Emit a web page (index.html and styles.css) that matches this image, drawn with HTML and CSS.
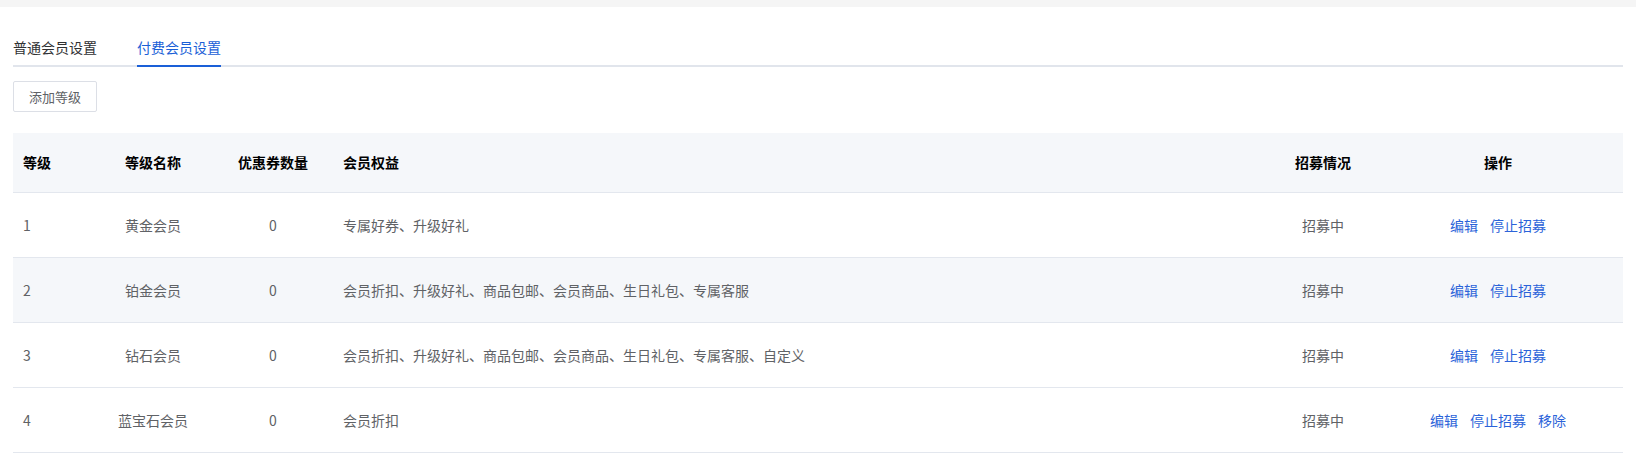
FILE: index.html
```html
<!DOCTYPE html>
<html lang="zh-CN">
<head>
<meta charset="utf-8">
<title>付费会员设置</title>
<link rel="stylesheet" href="styles.css">
</head>
<body>
<div class="topbar"></div>
<div class="page">
  <div class="tabs">
    <div class="tab">普通会员设置</div>
    <div class="tab active">付费会员设置</div>
  </div>
  <div class="toolbar">
    <button class="btn">添加等级</button>
  </div>
  <table class="grid">
    <colgroup>
      <col class="c-level">
      <col class="c-name">
      <col class="c-count">
      <col class="c-rights">
      <col class="c-status">
      <col class="c-ops">
    </colgroup>
    <thead>
      <tr>
        <th class="left">等级</th>
        <th>等级名称</th>
        <th>优惠券数量</th>
        <th class="left">会员权益</th>
        <th>招募情况</th>
        <th>操作</th>
      </tr>
    </thead>
    <tbody>
      <tr>
        <td class="left">1</td>
        <td>黄金会员</td>
        <td>0</td>
        <td class="left">专属好券、升级好礼</td>
        <td>招募中</td>
        <td><span class="ops"><a>编辑</a><a>停止招募</a></span></td>
      </tr>
      <tr class="stripe">
        <td class="left">2</td>
        <td>铂金会员</td>
        <td>0</td>
        <td class="left">会员折扣、升级好礼、商品包邮、会员商品、生日礼包、专属客服</td>
        <td>招募中</td>
        <td><span class="ops"><a>编辑</a><a>停止招募</a></span></td>
      </tr>
      <tr>
        <td class="left">3</td>
        <td>钻石会员</td>
        <td>0</td>
        <td class="left">会员折扣、升级好礼、商品包邮、会员商品、生日礼包、专属客服、自定义</td>
        <td>招募中</td>
        <td><span class="ops"><a>编辑</a><a>停止招募</a></span></td>
      </tr>
      <tr>
        <td class="left">4</td>
        <td>蓝宝石会员</td>
        <td>0</td>
        <td class="left">会员折扣</td>
        <td>招募中</td>
        <td><span class="ops"><a>编辑</a><a>停止招募</a><a>移除</a></span></td>
      </tr>
    </tbody>
  </table>
</div>
</body>
</html>
```

FILE: styles.css
```css
* { box-sizing: border-box; }
html, body { margin: 0; padding: 0; background: #fff; }
body {
  font-family: "Microsoft YaHei", "Noto Sans CJK SC", "Liberation Sans", sans-serif;
  font-size: 14px;
  color: #606266;
}
.topbar { height: 7px; background: #f5f5f5; }
.page { padding: 20px 13px 0 13px; }

.tabs {
  display: flex;
  gap: 40px;
  height: 40px;
  border-bottom: 2px solid #e1e5ec;
}
.tab {
  height: 40px;
  line-height: 40px;
  font-size: 14px;
  color: #303133;
  margin-bottom: -2px;
  border-bottom: 2px solid transparent;
}
.tab.active {
  color: #1a5fd7;
  border-bottom-color: #1a5fd7;
}

.toolbar { padding-top: 14px; padding-bottom: 21px; }
.btn {
  width: 84px;
  height: 31px;
  padding: 0;
  background: #fff;
  border: 1px solid #dcdfe6;
  border-radius: 2px;
  font-family: inherit;
  font-size: 13px;
  color: #606266;
}

.grid {
  width: 100%;
  border-collapse: collapse;
  table-layout: fixed;
}
.c-level { width: 80px; }
.c-name { width: 120px; }
.c-count { width: 120px; }
.c-status { width: 100px; }
.c-ops { width: 250px; }

.grid th {
  height: 59px;
  background: #f5f7fa;
  color: #000;
  font-weight: bold;
  font-size: 14px;
  text-align: center;
  padding: 0 10px;
  border-bottom: 1px solid #e3e7ee;
}
.grid td {
  height: 65px;
  text-align: center;
  padding: 0 10px;
  border-bottom: 1px solid #e3e7ee;
  white-space: nowrap;
}
.grid .left { text-align: left; }
.grid tr.stripe td { background: #f5f7fa; }

.ops { display: inline-flex; gap: 12px; }
.ops a { color: #2b63d9; cursor: pointer; }
```
